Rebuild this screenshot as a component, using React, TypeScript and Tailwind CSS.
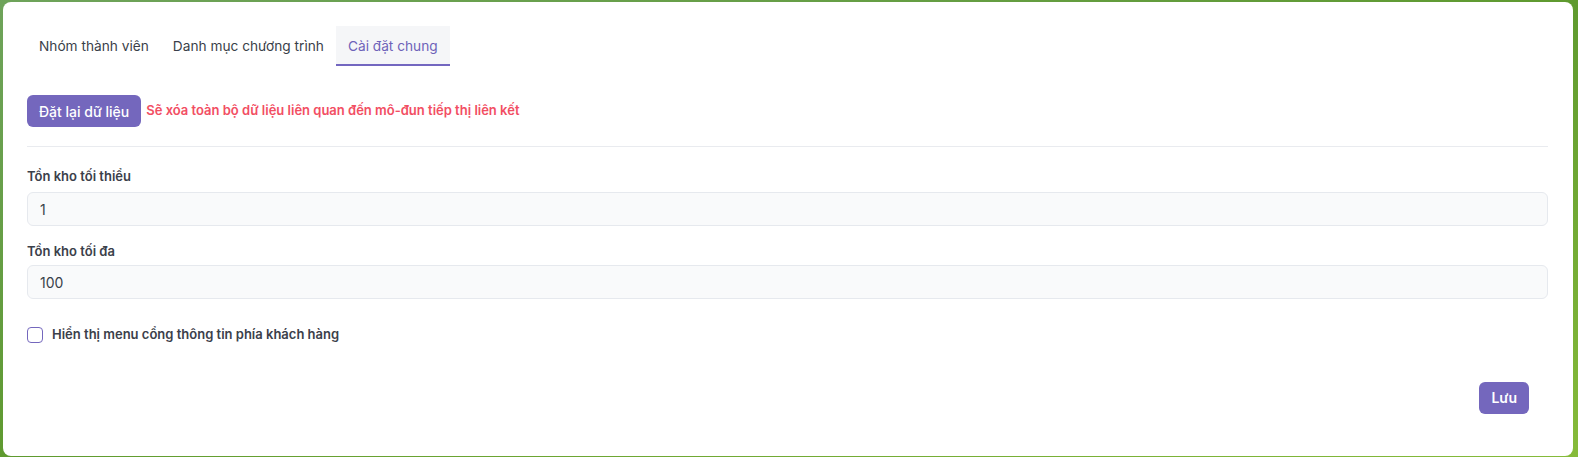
import { useState } from "react";

export default function App() {
  const [tab, setTab] = useState(2);
  const [minStock, setMinStock] = useState("1");
  const [maxStock, setMaxStock] = useState("100");
  const [showMenu, setShowMenu] = useState(false);
  const tabs = ["Nhóm thành viên", "Danh mục chương trình", "Cài đặt chung"];

  return (
    <div
      className="h-[457px] w-full bg-gradient-to-br from-[#6ea35a] via-[#5f9a2f] to-[#86bb3a] pt-[2px] pb-[1px] pl-[3px] pr-[5px]"
      style={{ fontFamily: "Inter, 'Noto Sans', sans-serif" }}
    >
      <div className="h-full rounded-lg bg-white pl-6 pr-[25px] pt-6">
        {/* tabs */}
        <div className="flex">
          {tabs.map((t, i) => (
            <button
              key={t}
              onClick={() => setTab(i)}
              className={
                i === tab
                  ? "border-b-2 border-[#7367c0] bg-[#f5f6f8] px-3 pt-[10px] pb-[8px] text-[13.7px] leading-5 text-[#6e62b9]"
                  : "border-b-2 border-transparent px-3 pt-[10px] pb-[8px] text-[13.7px] leading-5 text-[#3a3f4a]"
              }
            >
              {t}
            </button>
          ))}
        </div>

        {/* reset */}
        <div className="mt-[29px] flex items-center gap-[5px]">
          <button className="h-8 rounded-md bg-[#7467bd] px-3 text-[14px] font-medium text-white">
            Đặt lại dữ liệu
          </button>
          <span className="text-[13px] font-semibold text-[#f24e63]">
            Sẽ xóa toàn bộ dữ liệu liên quan đến mô-đun tiếp thị liên kết
          </span>
        </div>

        <div className="mt-[19px] border-t border-[#e9ebef]" />

        {/* fields */}
        <div className="mt-[19px]">
          <label className="block text-[13px] font-semibold leading-5 text-[#3b404a]">
            Tồn kho tối thiểu
          </label>
          <input
            value={minStock}
            onChange={(e) => setMinStock(e.target.value)}
            className="mt-[6px] h-[34px] w-full rounded-md border border-[#e6e9ee] bg-[#f9fafb] px-3 text-[14px] text-[#3a3f4a] outline-none"
          />
        </div>
        <div className="mt-[15px]">
          <label className="block text-[13px] font-semibold leading-5 text-[#3b404a]">
            Tồn kho tối đa
          </label>
          <input
            value={maxStock}
            onChange={(e) => setMaxStock(e.target.value)}
            className="mt-[4px] h-[34px] w-full rounded-md border border-[#e6e9ee] bg-[#f9fafb] px-3 text-[14px] text-[#3a3f4a] outline-none"
          />
        </div>

        <label className="mt-[26px] flex cursor-pointer items-center gap-[9px]">
          <input
            type="checkbox"
            checked={showMenu}
            onChange={(e) => setShowMenu(e.target.checked)}
            className="h-4 w-4 appearance-none rounded-[4px] border-[1.5px] border-[#7467bd] bg-white checked:bg-[#7467bd]"
          />
          <span className="text-[13px] font-semibold text-[#3b404a]">
            Hiển thị menu cổng thông tin phía khách hàng
          </span>
        </label>

        <div className="mt-[37px] flex justify-end pr-[19px]">
          <button className="h-8 rounded-md bg-[#7467bd] px-3 text-[14px] font-semibold text-white">
            Lưu
          </button>
        </div>
      </div>
    </div>
  );
}
